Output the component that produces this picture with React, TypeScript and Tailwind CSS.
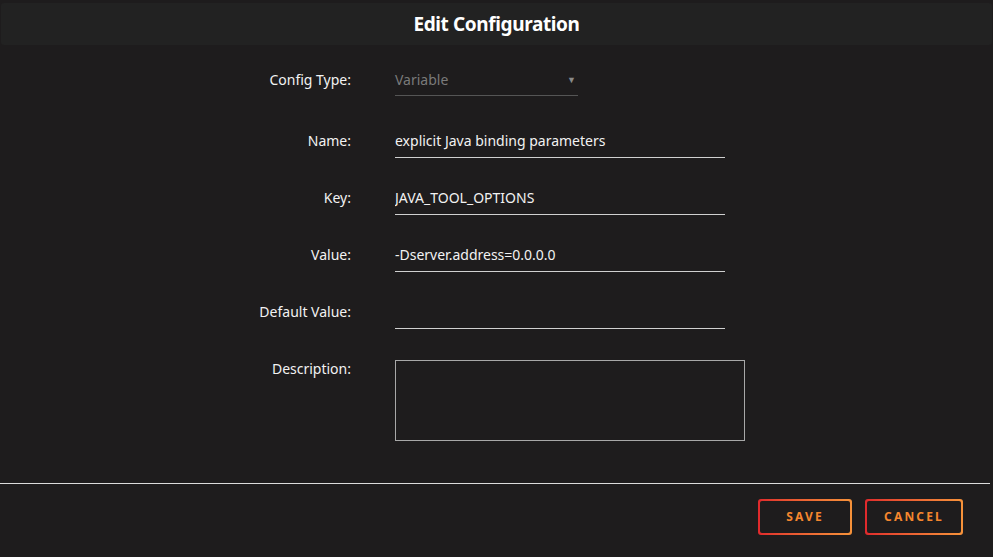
import { useState } from 'react';

const fields = [
  { label: 'Name:', value: 'explicit Java binding parameters' },
  { label: 'Key:', value: 'JAVA_TOOL_OPTIONS' },
  { label: 'Value:', value: '-Dserver.address=0.0.0.0' },
  { label: 'Default Value:', value: '' },
];

function OutlineButton({ children, width }: { children: string; width: string }) {
  return (
    <div className={`rounded-[3px] bg-gradient-to-r from-[#e0282c] to-[#f6923a] p-[2px] ${width}`}>
      <button className="h-[32px] w-full rounded-[2px] bg-[#1e1c1d] text-[12px] font-bold tracking-[0.18em] text-[#f5862e]">
        {children}
      </button>
    </div>
  );
}

export default function App() {
  const [values, setValues] = useState(fields.map((f) => f.value));
  const [description, setDescription] = useState('');

  return (
    <div
      className="flex h-[557px] w-[993px] flex-col bg-[#1e1c1d] pt-[3px] text-[14px] text-[#f2f2f2]"
      style={{ fontFamily: '"Noto Sans", "Open Sans", sans-serif' }}
    >
      <div className="mx-[1px] flex h-[42px] items-center justify-center rounded-[3px] bg-[#222222]">
        <h1 className="text-[19px] font-bold tracking-[-0.02em] text-white">Edit Configuration</h1>
      </div>

      <div className="ml-[250px] mt-[25px] flex w-[495px] flex-col">
        <div className="flex gap-[44px]">
          <div className="w-[101px] text-right leading-[20px]">Config Type:</div>
          <div className="flex w-[183px] items-center justify-between border-b border-[#555] pb-[5px]">
            <span className="leading-[20px] text-[#7a7a7a]">Variable</span>
            <span className="mr-[2px] text-[9px] text-[#8a8a8a]">▼</span>
          </div>
        </div>

        <div className="mt-[35px] flex flex-col gap-[30px]">
          {fields.map((f, i) => (
            <div key={f.label} className="flex gap-[44px]">
              <div className="w-[101px] text-right leading-[20px]">{f.label}</div>
              <input
                value={values[i]}
                onChange={(e) => setValues(values.map((v, j) => (j === i ? e.target.value : v)))}
                className="w-[330px] border-b border-[#d0d0d0] bg-transparent pb-[6px] leading-[20px] text-[#f2f2f2] outline-none"
              />
            </div>
          ))}

          <div className="flex gap-[44px]">
            <div className="w-[101px] text-right leading-[20px]">Description:</div>
            <textarea
              value={description}
              onChange={(e) => setDescription(e.target.value)}
              className="mt-[1px] h-[81px] w-[350px] resize-none border border-[#a8a8a8] bg-transparent outline-none"
            />
          </div>
        </div>
      </div>

      <div className="mt-[42px] mr-[3px] h-px bg-[#dcdcdc]" />

      <div className="mt-[15px] flex justify-end gap-[13px] pr-[30px]">
        <OutlineButton width="w-[94px]">SAVE</OutlineButton>
        <OutlineButton width="w-[98px]">CANCEL</OutlineButton>
      </div>
    </div>
  );
}
